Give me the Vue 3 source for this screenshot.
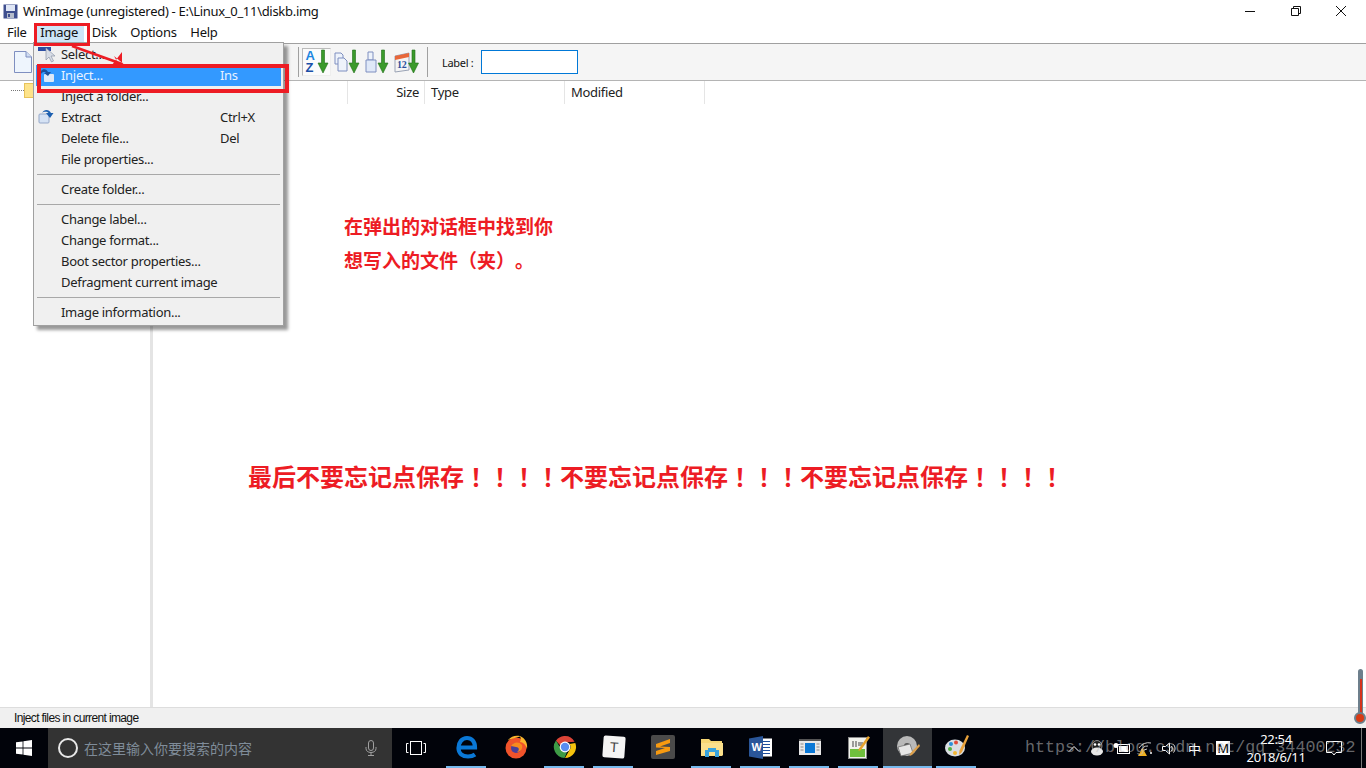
<template>
  <div class="screen">
    <!-- title bar -->
    <div class="titlebar">
      <svg class="app-icon" width="15" height="15" viewBox="0 0 15 15">
        <rect x="0.5" y="0.5" width="14" height="14" fill="#3f4f8f" />
        <rect x="3" y="1" width="9" height="6" fill="#dfe6f5" />
        <rect x="4" y="9" width="7" height="5" fill="#b5bccb" />
        <rect x="5" y="10" width="2" height="3" fill="#3f4f8f" />
      </svg>
      <span class="title">WinImage (unregistered) - E:\Linux_0_11\diskb.img</span>
      <div class="win-buttons">
        <svg width="12" height="12" viewBox="0 0 12 12"><path d="M1 6.500H11" stroke="#111" fill="none" /></svg>
        <svg width="12" height="12" viewBox="0 0 12 12"><path d="M1.500 3.500H8.500V10.500H1.500ZM3.500 3.500V1.500H10.500V8.500H8.500" stroke="#111" fill="none" /></svg>
        <svg width="12" height="12" viewBox="0 0 12 12"><path d="M1 1L11 11M11 1L1 11" stroke="#111" fill="none" /></svg>
      </div>
    </div>

    <!-- menu bar -->
    <div class="menubar">
      <span
        v-for="m in menus"
        :key="m"
        class="menu-title"
        :class="{ open: m === 'Image' }"
      >{{ m }}</span>
    </div>

    <!-- toolbar -->
    <div class="toolbar">
      <svg class="new-doc" width="20" height="24" viewBox="0 0 20 24">
        <path d="M1.500 1.500H13L18.500 7V22.500H1.500Z" fill="#eef5fd" stroke="#7f8fc0" />
        <path d="M13 1.500V7H18.500" fill="#cfdcf2" stroke="#7f8fc0" />
      </svg>
      <div class="tool-spacer"></div>
      <div class="tool-sep"></div>
      <div class="tool-btn pressed">
        <svg width="24" height="26" viewBox="0 0 24 26">
          <text x="0.500" y="11" class="az">A</text>
          <text x="0.500" y="23" class="az dark">Z</text>
          <path d="M16.500 1H19.500V14H23L18 24L13 14H16.500Z" fill="#3b9a2b" stroke="#1f6d17" stroke-width="0.6" />
        </svg>
      </div>
      <div class="tool-btn">
        <svg width="26" height="26" viewBox="0 0 26 26">
          <path d="M1 4H7L9 6V15H1Z" fill="#eef3fb" stroke="#7f8fc0" />
          <path d="M4 9H10L13 12V22H4Z" fill="#eef3fb" stroke="#7f8fc0" />
          <path d="M18.500 1H21.500V14H25L20 24L15 14H18.500Z" fill="#3b9a2b" stroke="#1f6d17" stroke-width="0.6" />
        </svg>
      </div>
      <div class="tool-btn">
        <svg width="24" height="26" viewBox="0 0 24 26">
          <path d="M3 3H8V11H3Z" fill="#eef3fb" stroke="#7f8fc0" />
          <path d="M1 11H11V23H1Z" fill="#dfe8f8" stroke="#7f8fc0" />
          <path d="M16.500 1H19.500V14H23L18 24L13 14H16.500Z" fill="#3b9a2b" stroke="#1f6d17" stroke-width="0.6" />
        </svg>
      </div>
      <div class="tool-btn">
        <svg width="25" height="26" viewBox="0 0 25 26">
          <path d="M1 7L15 4V21L1 23Z" fill="#f4f4f4" stroke="#9aa3b5" />
          <path d="M1 7L15 4V8L1 11Z" fill="#e8673a" />
          <text x="3" y="19" class="cal">12</text>
          <path d="M18 1H21V14H24.500L19.500 24L14.500 14H18Z" fill="#3b9a2b" stroke="#1f6d17" stroke-width="0.6" />
        </svg>
      </div>
      <div class="tool-sep second"></div>
      <span class="label-text">Label :</span>
      <div class="label-input"></div>
    </div>

    <!-- tree and file list -->
    <div class="content">
      <div class="tree">
        <span class="tree-dots"></span>
        <span class="tree-folder"></span>
      </div>
      <div class="splitter"></div>
      <div class="list">
        <div class="list-head">
          <div class="col col-name"></div>
          <div class="col col-size">Size</div>
          <div class="col col-type">Type</div>
          <div class="col col-mod">Modified</div>
        </div>
      </div>
    </div>

    <!-- status bar -->
    <div class="statusbar">Inject files in current image</div>

    <!-- taskbar -->
    <div class="taskbar">
      <div class="start">
        <svg width="16" height="16" viewBox="0 0 16 16">
          <path d="M0 2.300L6.600 1.400V7.600H0ZM7.400 1.300L16 0V7.600H7.400ZM0 8.400H6.600V14.600L0 13.700ZM7.400 8.400H16V16L7.400 14.700Z" fill="#fff" />
        </svg>
      </div>
      <div class="search">
        <span class="cortana"></span>
        <span class="search-text">在这里输入你要搜索的内容</span>
        <svg class="mic" width="12" height="16" viewBox="0 0 12 16">
          <rect x="3.500" y="0.500" width="5" height="10" rx="2.500" fill="none" stroke="#a0a0a0" />
          <path d="M1 7V8.500C1 11 3 12.500 6 12.500C9 12.500 11 11 11 8.500V7M6 12.500V15.500M3 15.500H9" fill="none" stroke="#a0a0a0" />
        </svg>
      </div>
      <div class="task-view">
        <svg width="20" height="14" viewBox="0 0 20 14">
          <rect x="4.500" y="0.500" width="11" height="13" fill="none" stroke="#fff" />
          <path d="M2.500 2.500H0.500V11.500H2.500M17.500 2.500H19.500V11.500H17.500" fill="none" stroke="#fff" />
        </svg>
      </div>

      <div class="task-icons">
        <div class="task-item running">
          <svg width="22" height="24" viewBox="0 0 22 24">
            <path d="M3.500 12.500H19C19 6 15.500 3 11 3C6 3 2.500 7.500 2.500 13C2.500 18.500 6.500 21.500 12 21.500C14.500 21.500 17 21 19 19.500" fill="none" stroke="#0a78d6" stroke-width="4.200" />
          </svg>
        </div>
        <div class="task-item">
          <svg width="24" height="24" viewBox="0 0 24 24">
            <circle cx="12" cy="13" r="10.500" fill="#f0532b" />
            <path d="M4 5C7 1 12 0 16 1C21 3 24 8 23 14C22 10 19 7 16 7C17 5 17 3 16 1.500" fill="#fbb52c" />
            <circle cx="12" cy="13" r="5" fill="#4a3f9a" />
            <path d="M7 11C9 7 15 6 18 10C19 13 17 17 13 17C16 15 15 12 12 12Z" fill="#f98a1e" />
          </svg>
        </div>
        <div class="task-item running">
          <svg width="24" height="24" viewBox="0 0 24 24">
            <path d="M12 1A11 11 0 0 1 22 7.500H12A5 5 0 0 0 7.500 10L3.500 5A11 11 0 0 1 12 1Z" fill="#db4437" transform="rotate(-5 12 12)" />
            <path d="M22.300 8A11 11 0 0 1 12 23L16.500 15A5 5 0 0 0 16.500 9Z" fill="#f4c20d" />
            <path d="M3 5.500L8 14A5 5 0 0 0 14 17L11.500 23A11 11 0 0 1 3 5.500Z" fill="#3d9b46" />
            <circle cx="12" cy="12" r="5.400" fill="#fff" />
            <circle cx="12" cy="12" r="4.200" fill="#5a8df0" />
          </svg>
        </div>
        <div class="task-item running">
          <div class="typora"><span>T</span></div>
        </div>
        <div class="task-item">
          <svg width="24" height="24" viewBox="0 0 24 24">
            <rect width="24" height="24" rx="2" fill="#4a4a4a" />
            <path d="M5 11L19 6V10L9 13.500L19 14V18L5 22V18L14 15L5 14.500Z" fill="#f79a10" transform="translate(0 -2)" />
          </svg>
        </div>
        <div class="task-item running">
          <svg width="22" height="20" viewBox="0 0 22 20">
            <path d="M0 2H8L10 4H21V19H0Z" fill="#f7d774" />
            <path d="M0 6H22V18.500H0Z" fill="#fbe08c" />
            <path d="M4 20V13H7V11H15V13H18V20H14V15H8V20Z" fill="#38a3dd" />
          </svg>
        </div>
        <div class="task-item running">
          <svg width="23" height="23" viewBox="0 0 23 23">
            <rect x="10" y="2.500" width="13" height="18" fill="#fff" />
            <path d="M12 5.500H21M12 8.500H21M12 11.500H21M12 14.500H21M12 17.500H21" stroke="#1e4e9c" />
            <path d="M0 2.500L14 0V23L0 20.500Z" fill="#2a5699" />
            <text x="2.500" y="15" class="word">W</text>
          </svg>
        </div>
        <div class="task-item running">
          <svg width="22" height="16" viewBox="0 0 22 16">
            <rect width="22" height="16" fill="#e8e8e8" />
            <rect width="22" height="2" fill="#555" />
            <rect x="6" y="4" width="10" height="10" fill="#0a78d6" />
            <path d="M1.500 5H4.500M1.500 8H4.500M1.500 11H4.500M17.500 5H20.500M17.500 8H20.500M17.500 11H20.500" stroke="#888" />
          </svg>
        </div>
        <div class="task-item running">
          <svg width="22" height="24" viewBox="0 0 22 24">
            <rect x="0.500" y="2.500" width="18" height="21" fill="#f2f4ee" stroke="#8a8a8a" />
            <rect x="2" y="14" width="15" height="8" fill="#6fbf3d" />
            <path d="M5 6V12M8 6V12M10 8H15M10 10H14" stroke="#444" />
            <path d="M20 1L22 2.500L13 15L10.500 16L11 13.500Z" fill="#e7a32b" />
          </svg>
        </div>
        <div class="task-item active">
          <svg width="24" height="22" viewBox="0 0 24 22">
            <circle cx="11" cy="10" r="10" fill="#b9b9b9" />
            <circle cx="11" cy="10" r="3" fill="#555" />
            <path d="M2 11L14 8L17 17L5 20Z" fill="#e6e6e6" stroke="#666" stroke-width="0.7" />
            <path d="M23 8L24 10L16 19L13.500 20L14.500 17Z" fill="#dca04c" />
          </svg>
        </div>
        <div class="task-item running">
          <svg width="24" height="24" viewBox="0 0 24 24">
            <ellipse cx="10" cy="13" rx="10" ry="8.500" fill="#d9dde2" />
            <circle cx="6" cy="9" r="2" fill="#2b8fd8" />
            <circle cx="11" cy="7.500" r="2" fill="#e14b3b" />
            <circle cx="5" cy="14" r="2" fill="#52b043" />
            <circle cx="10" cy="18" r="2" fill="#f2b632" />
            <path d="M22 0L24 1L17 17L14 20L14.500 15.500Z" fill="#e9a23b" />
          </svg>
        </div>
      </div>

      <div class="tray">
        <svg class="chevron" width="12" height="7" viewBox="0 0 12 7"><path d="M1 6.500L6 1.500L11 6.500" fill="none" stroke="#fff" /></svg>
        <svg class="qq" width="14" height="16" viewBox="0 0 14 16">
          <ellipse cx="7" cy="6" rx="5" ry="5.500" fill="#222" stroke="#ddd" stroke-width="0.600" />
          <circle cx="5" cy="4.500" r="1.300" fill="#fff" />
          <circle cx="9" cy="4.500" r="1.300" fill="#fff" />
          <ellipse cx="7" cy="11.500" rx="6" ry="4" fill="#e8e8e8" />
        </svg>
        <svg class="battery" width="18" height="13" viewBox="0 0 18 13">
          <rect x="4.500" y="2.500" width="12" height="9" fill="none" stroke="#fff" />
          <rect x="6" y="4" width="9" height="6" fill="#fff" />
          <circle cx="3" cy="3.500" r="2.500" fill="#fff" />
        </svg>
        <svg class="wifi" width="17" height="15" viewBox="0 0 17 15">
          <path d="M3 10A7 7 0 0 1 10 5M1 7A11 11 0 0 1 13 2M5 12A4 4 0 0 1 9 8" fill="none" stroke="#ccc" />
          <circle cx="13" cy="12" r="1" fill="#fff" />
          <path d="M4.500 7L9 15H0Z" fill="#f2b01e" />
        </svg>
        <svg class="volume" width="15" height="13" viewBox="0 0 15 13">
          <path d="M0.500 4.500H3.500L7.500 1V12L3.500 8.500H0.500Z" fill="none" stroke="#fff" />
          <path d="M9.500 4C10.500 5.500 10.500 7.500 9.500 9M11.500 2.500C13.500 5 13.500 8 11.500 10.500" fill="none" stroke="#fff" />
        </svg>
        <span class="ime">中</span>
        <span class="m-box">M</span>
        <div class="clock">
          <span>22:54</span>
          <span>2018/6/11</span>
        </div>
        <svg class="notify" width="16" height="15" viewBox="0 0 16 15">
          <path d="M0.500 0.500H15.500V11.500H10L8 14L6 11.500H0.500Z" fill="none" stroke="#fff" />
        </svg>
        <div class="show-desktop"></div>
      </div>
    </div>

    <!-- open Image menu -->
    <div class="dropdown">
      <template v-for="(item, i) in imageMenu" :key="i">
        <div v-if="item.sep" class="menu-sep"></div>
        <div v-else class="menu-item" :class="{ hot: item.hot }">
          <span class="menu-label">{{ item.label }}</span>
          <span class="menu-key">{{ item.key }}</span>
        </div>
      </template>
      <svg class="menu-icon icon-select" width="18" height="17" viewBox="0 0 18 17">
        <rect x="0" y="1" width="13" height="4" fill="#2c4fa3" />
        <path d="M8 2L8 14L11 11L13.500 16L15.500 15L13 10L17 10Z" fill="#d8dde6" stroke="#8d96a8" stroke-width="0.7" />
      </svg>
      <svg class="menu-icon icon-inject" width="15" height="15" viewBox="0 0 15 15">
        <rect x="4" y="6" width="10" height="8" rx="1" fill="#dce8f7" />
        <path d="M1 3C3 0 7 1 8 4L11 4L8 8L4 5L6 5C5 4 3 3 1 6Z" fill="#1c4f9c" />
      </svg>
      <svg class="menu-icon icon-extract" width="16" height="15" viewBox="0 0 16 15">
        <rect x="1" y="5" width="10" height="9" rx="1" fill="#d5e2f4" stroke="#94a7c9" />
        <path d="M4 4C6 0 11 0 13 4L15.500 4L12 9L8 4L10.500 4C9.500 3 7 2 4 4Z" fill="#1c5fb0" />
      </svg>
    </div>

    <!-- red annotations drawn over the screenshot -->
    <div class="mark mark-image"></div>
    <div class="mark mark-inject"></div>
    <svg class="mark-arrow" width="60" height="26" viewBox="0 0 60 26">
      <path d="M2 2L52 20" stroke="#ed1c24" stroke-width="2.500" />
      <path d="M52 8L52 23L42 21Z M56 22L44 12L50 23Z" fill="#ed1c24" />
    </svg>
    <div class="note note-small">
      <div>在弹出的对话框中找到你</div>
      <div>想写入的文件（夹）。</div>
    </div>
    <div class="note note-big">最后不要忘记点保存！！！！不要忘记点保存！！！不要忘记点保存！！！！</div>

    <!-- thermometer gadget and blog watermark -->
    <div class="thermo">
      <div class="thermo-tube"><div class="thermo-fill"></div></div>
      <div class="thermo-bulb"></div>
    </div>
    <div class="watermark">https://blog.csdn.net/qq_34400232</div>
  </div>
</template>

<script setup>
// 메뉴 목록
const menus = ["File", "Image", "Disk", "Options", "Help"];

const imageMenu = [
  { label: "Select..." },
  { label: "Inject...", key: "Ins", hot: true },
  { label: "Inject a folder..." },
  { label: "Extract", key: "Ctrl+X" },
  { label: "Delete file...", key: "Del" },
  { label: "File properties..." },
  { sep: true },
  { label: "Create folder..." },
  { sep: true },
  { label: "Change label..." },
  { label: "Change format..." },
  { label: "Boot sector properties..." },
  { label: "Defragment current image" },
  { sep: true },
  { label: "Image information..." },
];
</script>

<style>
html,
body {
  margin: 0;
  overflow: hidden;
}
</style>

<style scoped>
.screen {
  position: relative;
  width: 1366px;
  height: 768px;
  overflow: hidden;
  background: #fff;
  display: flex;
  flex-direction: column;
  font-family: "Noto Sans", "Noto Sans CJK SC", sans-serif;
  font-size: 13px;
  letter-spacing: -0.3px;
  color: #111;
}

.titlebar {
  height: 22px;
  display: flex;
  align-items: center;
  padding-left: 3px;
  flex-shrink: 0;
}

.title {
  margin-left: 5px;
}

.win-buttons {
  margin-left: auto;
  margin-right: 19px;
  display: flex;
  gap: 33.500px;
}

.menubar {
  height: 21px;
  flex-shrink: 0;
  display: flex;
  align-items: center;
  padding-left: 1px;
  border-bottom: 1px solid #a0a0a0;
  box-sizing: content-box;
}

.menu-title {
  padding: 0 6px;
  height: 19px;
  line-height: 19px;
  margin-right: 1.750px;
}

.menu-title.open {
  background: #cde6f7;
}

.toolbar {
  height: 36px;
  flex-shrink: 0;
  display: flex;
  align-items: center;
  background: #f5f5f5;
  border-bottom: 1px solid #b4b4b4;
  padding-left: 13px;
}

.new-doc {
  flex-shrink: 0;
}

.tool-spacer {
  width: 265px;
  flex-shrink: 0;
}

.tool-sep {
  width: 1px;
  height: 30px;
  background: #a0a0a0;
  margin-right: 3px;
}

.tool-sep.second {
  margin: 0 14px 0 5px;
}

.tool-btn {
  width: 29px;
  height: 28px;
  display: flex;
  align-items: center;
  justify-content: center;
  margin-right: 1px;
  box-sizing: border-box;
}

.tool-btn.pressed {
  background: #fbfbfb;
  border: 1px solid #bbb;
  border-right-color: #eee;
  border-bottom-color: #eee;
}

.az {
  font-family: "Liberation Sans", sans-serif;
  font-size: 13px;
  font-weight: 700;
  fill: #1c86e0;
}

.az.dark {
  fill: #1a4fa8;
}

.cal {
  font-family: "Liberation Serif", serif;
  font-size: 10px;
  font-weight: 700;
  fill: #2a4f9c;
}

.word {
  font-family: "Liberation Sans", sans-serif;
  font-size: 11px;
  font-weight: 700;
  fill: #fff;
}

.label-text {
  font-size: 11px;
  width: 39px;
  flex-shrink: 0;
}

.label-input {
  width: 97px;
  height: 24px;
  background: #fff;
  border: 1px solid #0078d7;
  box-sizing: border-box;
}

.content {
  flex: 1;
  display: flex;
  min-height: 0;
  border-bottom: 1px solid #ddd;
}

.tree {
  width: 150px;
  flex-shrink: 0;
  position: relative;
  display: flex;
  align-items: flex-start;
  padding: 2px 0 0 11px;
  box-sizing: border-box;
}

.tree-dots {
  width: 13px;
  margin-top: 7px;
  border-top: 1px dotted #777;
}

.tree-folder {
  width: 10px;
  height: 15px;
  background: #fde38a;
  border: 1px solid #e8c35a;
  box-sizing: border-box;
}

.splitter {
  width: 3px;
  background: #e4e4e4;
  flex-shrink: 0;
}

.list {
  flex: 1;
}

.list-head {
  height: 23px;
  display: flex;
}

.col {
  border-right: 1px solid #e5e5e5;
  box-sizing: border-box;
  line-height: 23px;
  color: #222;
}

.col-name {
  width: 195px;
}

.col-size {
  width: 77px;
  text-align: right;
  padding-right: 5px;
}

.col-type {
  width: 140px;
  padding-left: 6px;
}

.col-mod {
  width: 140px;
  padding-left: 6px;
}

.statusbar {
  height: 20px;
  flex-shrink: 0;
  background: #f0f0f0;
  font-family: "Liberation Sans", sans-serif;
  font-size: 12px;
  line-height: 21px;
  padding-left: 14px;
  letter-spacing: -0.630px;
}

.taskbar {
  height: 40px;
  flex-shrink: 0;
  background: #01030a;
  display: flex;
  align-items: stretch;
  color: #fff;
}

.start {
  width: 48px;
  flex-shrink: 0;
  display: flex;
  align-items: center;
  justify-content: center;
}

.search {
  width: 344px;
  flex-shrink: 0;
  background: #333;
  display: flex;
  align-items: center;
  box-sizing: border-box;
  padding: 0 15px 0 10px;
}

.cortana {
  width: 20px;
  height: 20px;
  box-sizing: border-box;
  border: 2.500px solid #e8e8e8;
  border-radius: 50%;
  flex-shrink: 0;
}

.search-text {
  margin-left: 6px;
  font-size: 14px;
  letter-spacing: 0;
  color: #7f8c99;
  font-family: "Noto Sans CJK SC", sans-serif;
}

.mic {
  margin-left: auto;
}

.task-view {
  width: 48px;
  flex-shrink: 0;
  display: flex;
  align-items: center;
  justify-content: center;
}

.task-icons {
  display: flex;
  margin-left: 2px;
  align-items: stretch;
}

.task-item {
  width: 49px;
  display: flex;
  align-items: center;
  justify-content: center;
  position: relative;
  padding-bottom: 2px;
  box-sizing: border-box;
}

.task-item.running::after {
  content: "";
  position: absolute;
  left: 4px;
  right: 5px;
  bottom: 0;
  height: 2px;
  background: #76b9ed;
}

.task-item.active {
  background: #333538;
}

.task-item.active::after {
  content: "";
  position: absolute;
  left: 0;
  right: 0;
  bottom: 0;
  height: 2px;
  background: #76b9ed;
}

.typora {
  width: 22px;
  height: 22px;
  background: #f4f4f4;
  border-radius: 2px;
  transform: rotate(4deg);
  color: #444;
  font-size: 14px;
  text-align: center;
  line-height: 22px;
  font-family: "Liberation Sans", sans-serif;
}

.tray {
  flex: 1;
  position: relative;
  display: flex;
  align-items: center;
  padding-left: 87px;
}

.chevron {
  margin-right: 10px;
}

.qq {
  margin-right: 9px;
}

.battery {
  margin-right: 7px;
}

.wifi {
  margin-right: 7px;
}

.volume {
  margin-right: 11px;
}

.ime {
  font-family: "Noto Sans CJK SC", sans-serif;
  font-size: 13px;
  letter-spacing: 0;
  margin-right: 15px;
}

.m-box {
  width: 14px;
  height: 14px;
  background: #fff;
  color: #111;
  font-size: 13px;
  line-height: 14px;
  text-align: center;
  font-weight: 500;
}

.clock {
  width: 60px;
  margin-left: 16px;
  display: flex;
  flex-direction: column;
  align-items: center;
  line-height: 18px;
}

.notify {
  margin-left: 20px;
}

.show-desktop {
  position: absolute;
  right: 4px;
  top: 0;
  bottom: 0;
  width: 1px;
  background: #777;
}

.dropdown {
  position: absolute;
  left: 33px;
  top: 42px;
  width: 251px;
  height: 284px;
  box-sizing: border-box;
  background: #f0f0f0;
  border: 1px solid #a0a0a0;
  box-shadow: 4px 4px 3px rgba(0, 0, 0, 0.4);
  padding-top: 1px;
}

.menu-item {
  height: 21px;
  display: flex;
  align-items: center;
  padding: 0 0 2px 25px;
  margin: 0 2px;
  box-sizing: border-box;
  color: #222;
  white-space: nowrap;
}

.menu-item.hot {
  background: #3399ff;
  color: #e8f2ff;
}

.menu-label {
  width: 159px;
  flex-shrink: 0;
}

.menu-sep {
  height: 1px;
  background: #a8a8a8;
  margin: 4px 3px;
}

.menu-icon {
  position: absolute;
}

.icon-select {
  left: 4px;
  top: 3px;
}

.icon-inject {
  left: 6px;
  top: 25px;
}

.icon-extract {
  left: 4px;
  top: 66px;
}

.mark {
  position: absolute;
  border: 3px solid #ed1c24;
  box-sizing: border-box;
}

.mark-image {
  left: 34px;
  top: 23px;
  width: 56px;
  height: 23px;
}

.mark-inject {
  left: 37px;
  top: 64px;
  width: 252px;
  height: 29px;
  border-width: 4px;
}

.mark-arrow {
  position: absolute;
  left: 70px;
  top: 44px;
}

.note {
  position: absolute;
  color: #ed1c24;
  font-family: "Noto Sans CJK SC", sans-serif;
  font-weight: 700;
  letter-spacing: 0;
  text-spacing-trim: space-all;
}

.note-small {
  left: 344px;
  top: 209px;
  font-size: 19px;
  line-height: 34px;
}

/* TC 글꼴은 느낌표가 가운데 정렬됨 */
.note-big {
  left: 248px;
  top: 459px;
  font-family: "Noto Sans CJK TC", "Noto Sans CJK SC", sans-serif;
  font-size: 24px;
  line-height: 34px;
  white-space: nowrap;
}

.thermo {
  position: absolute;
  left: 1355px;
  top: 669px;
  width: 10px;
  height: 55px;
}

.thermo-tube {
  width: 5px;
  height: 50px;
  margin-left: 3px;
  background: #6d7f8c;
  border-radius: 3px 3px 0 0;
  display: flex;
  justify-content: center;
  padding-top: 10px;
  box-sizing: border-box;
}

.thermo-fill {
  width: 2px;
  height: 40px;
  background: #d5321c;
}

.thermo-bulb {
  position: absolute;
  left: -1px;
  bottom: 0;
  width: 12px;
  height: 12px;
  box-sizing: border-box;
  border-radius: 50%;
  background: #d83a14;
  border: 2px solid #6d7f8c;
}

.watermark {
  position: absolute;
  left: 1025px;
  top: 738px;
  font-family: "Liberation Mono", monospace;
  font-size: 16.700px;
  line-height: 20px;
  letter-spacing: 0;
  color: rgba(190, 190, 190, 0.55);
  white-space: nowrap;
}
</style>
